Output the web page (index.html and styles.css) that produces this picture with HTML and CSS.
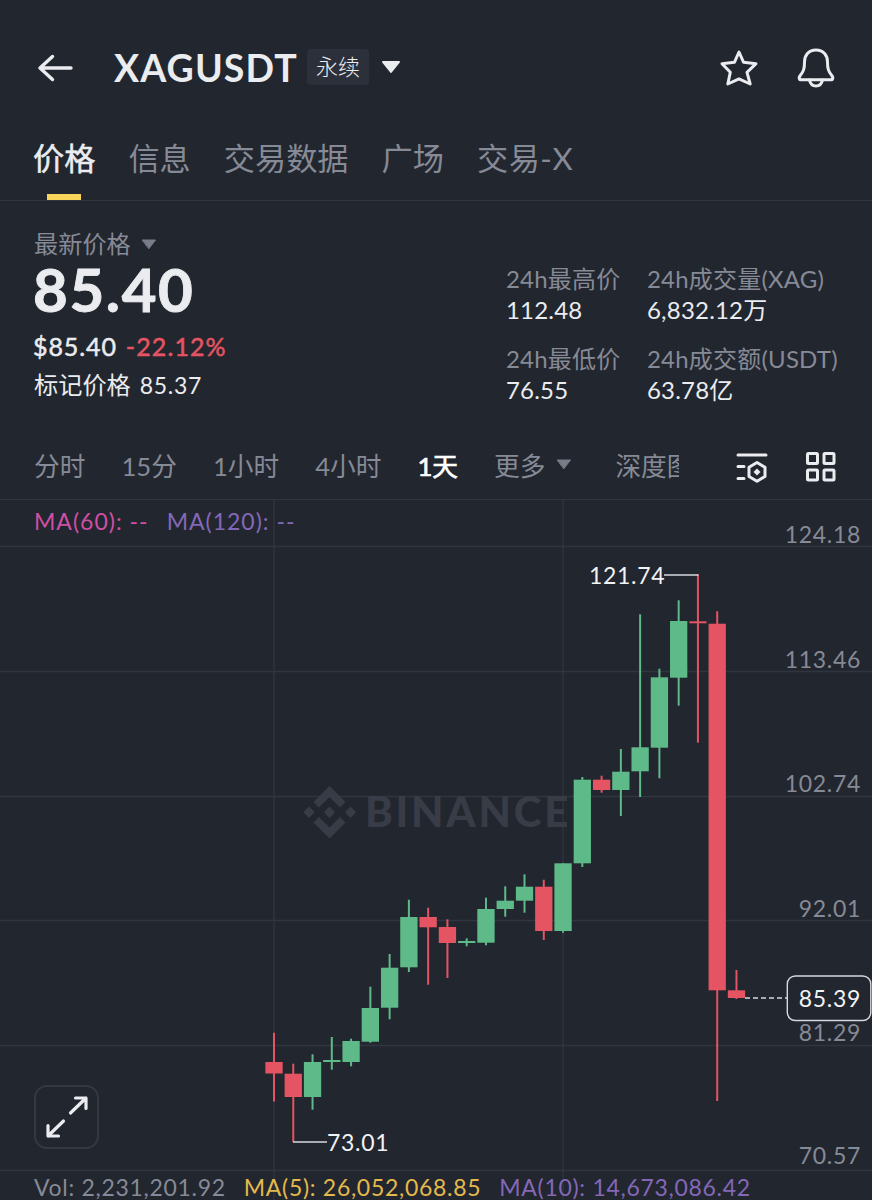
FILE: index.html
```html
<!DOCTYPE html>
<html lang="zh-CN">
<head>
    <meta charset="UTF-8">
    <meta name="viewport" content="width=device-width, initial-scale=1.0">
    <title>XAGUSDT</title>
    <link rel="stylesheet" href="styles.css">
</head>
<body>
    <header class="top-bar">
        <svg class="back" width="36" height="30" viewBox="0 0 36 30">
            <path d="M34 15H3M15.500 3.500L3 15l12.500 11.500"/>
        </svg>
        <h1>XAGUSDT</h1>
        <span class="badge">永续</span>
        <svg class="caret-big" width="20" height="13" viewBox="0 0 20 13"><path d="M2 1h16L10 11z"/></svg>
        <div class="top-icons">
            <svg width="40" height="40" viewBox="0 0 40 40">
                <path d="M20 4l4.600 10.300 12.400 1.400-9 8.600 3.200 11.700-11.200-5.100L8.800 36l2.500-11.700-8.300-8.600 12.400-1.400z"/>
            </svg>
            <svg width="40" height="42" viewBox="0 0 40 42">
                <path d="M20 3C12.500 3 8.500 8.500 8.500 15c0 7-1 9.500-4.300 13.500-1.500 2-1.300 4.200 1 4.200h29.600c2.300 0 2.500-2.200 1-4.200C32.500 24.500 31.500 22 31.500 15 31.500 8.500 27.500 3 20 3z"/>
                <path d="M13.500 33c.8 4 3.300 6 6.500 6s5.700-2 6.500-6"/>
            </svg>
        </div>
    </header>

    <nav class="tabs">
        <a class="tab active">价格</a>
        <a class="tab">信息</a>
        <a class="tab">交易数据</a>
        <a class="tab">广场</a>
        <a class="tab">交易-X</a>
    </nav>

    <section class="ticker">
        <div class="price-box">
            <div class="price-label">最新价格
                <svg width="16" height="11" viewBox="0 0 16 11"><path d="M1.500 1h13L8 9.500z"/></svg>
            </div>
            <div class="price">85.40</div>
            <div class="change"><span class="usd">$85.40</span><span class="percent">-22.12%</span></div>
            <div class="mark"><span>标记价格</span><span class="mark-num">85.37</span></div>
        </div>
        <div class="stats">
            <div class="stat"><div class="stat-label">24h最高价</div><div class="stat-value">112.48</div></div>
            <div class="stat"><div class="stat-label">24h成交量(XAG)</div><div class="stat-value">6,832.12万</div></div>
            <div class="stat"><div class="stat-label">24h最低价</div><div class="stat-value">76.55</div></div>
            <div class="stat"><div class="stat-label">24h成交额(USDT)</div><div class="stat-value">63.78亿</div></div>
        </div>
    </section>

    <div class="intervals">
        <div class="interval-list">
            <span>分时</span>
            <span>15分</span>
            <span>1小时</span>
            <span>4小时</span>
            <span class="selected">1天</span>
            <span class="more">更多<svg width="16" height="11" viewBox="0 0 16 11"><path d="M1.500 1h13L8 9.500z"/></svg></span>
            <span>深度图</span>
        </div>
        <div class="tools">
            <svg width="34" height="32" viewBox="0 0 34 32">
                <path d="M3 4h28M3 15.500h6M3 27.500h6"/>
                <path d="M22 11.500l8 4.800v9.200l-8 4.800-8-4.800v-9.200z"/>
                <path class="solid" d="M22 17.500l3.500 3.500-3.500 3.500-3.500-3.500z"/>
            </svg>
            <svg width="32" height="32" viewBox="0 0 32 32">
                <rect x="2.500" y="2.500" width="10" height="10" rx="1"/>
                <rect x="19" y="2.500" width="10" height="10" rx="1"/>
                <rect x="2.500" y="19" width="10" height="10" rx="1"/>
                <rect x="19" y="19" width="10" height="10" rx="1"/>
            </svg>
        </div>
    </div>

    <main class="chart">
        <svg class="plot" width="872" height="700" viewBox="0 500 872 700">
            <path class="grid" d="M0 546.500H872M0 671.500H872M0 796.500H872M0 920.500H872M0 1045.500H872M0 1170.500H872M274 500V1200M563 500V1200"/>

            <!-- watermark -->
            <g class="watermark">
                <path d="M329.500 786l16 16-5.500 5.500-10.500-10.500-10.500 10.500-5.500-5.500zM329.500 838.500l-16-16 5.500-5.500 10.500 10.500 10.500-10.500 5.500 5.500z"/>
                <path d="M309 806.500l5.700 5.700-5.700 5.700-5.700-5.700zM350.500 806.500l5.700 5.700-5.700 5.700-5.700-5.700zM329.500 806.500l5.700 5.700-5.700 5.700-5.700-5.700z"/>
                <text x="365" y="827" textLength="204">BINANCE</text>
            </g>

            <g id="candles"></g>

            <path class="pointer" d="M664 575H698.500M293 1142H327"/>
            <path class="last-line" d="M745 998H787"/>
            <text class="peak" x="589" y="584">121.74</text>
            <text class="peak" x="327" y="1151">73.01</text>

            <g class="axis">
                <text x="861" y="542.500">124.18</text>
                <text x="861" y="667.500">113.46</text>
                <text x="861" y="792">102.74</text>
                <text x="861" y="917">92.01</text>
                <text x="861" y="1041">81.29</text>
                <text x="861" y="1164">70.57</text>
            </g>
            <rect class="last-box" x="787.300" y="976" width="83.500" height="44.500" rx="8"/>
            <text class="last-price" x="861" y="1007">85.39</text>
        </svg>

        <div class="legend">
            <span class="pink">MA(60): --</span>
            <span class="purple">MA(120): --</span>
        </div>
        <button class="expand">
            <svg width="46" height="46" viewBox="0 0 46 46">
                <path d="M26.500 19L42 4M31.500 4H42v10.500M19.500 27L4 42M4 31.500V42h10.500"/>
            </svg>
        </button>
        <div class="volume">
            <span>Vol: 2,231,201.92</span>
            <span class="yellow">MA(5): 26,052,068.85</span>
            <span class="purple">MA(10): 14,673,086.42</span>
        </div>
    </main>
    <script src="script.js"></script>
</body>
</html>
```
FILE: styles.css
```css
* {
    box-sizing: border-box;
}
body {
    margin: 0;
    width: 872px;
    height: 1200px;
    overflow: hidden;
    background-color: #22262f;
    color: #eaecef;
    font-family: Lato, "Noto Sans CJK SC", sans-serif;
}
svg {
    display: block;
    fill: none;
    stroke-linecap: round;
    stroke-linejoin: round;
}

/* header */
.top-bar {
    display: flex;
    align-items: center;
    height: 135px;
    padding: 0 36px 0 37px;
}
.back {
    stroke: #eaecef;
    stroke-width: 3.4;
}
h1 {
    margin: 0 0 0 41px;
    width: 193px;
    font-size: 37.5px;
    font-weight: 700;
    line-height: 50px;
    letter-spacing: 1.1px;
}
.badge {
    width: 62px;
    height: 36px;
    margin-bottom: 2px;
    border-radius: 4px;
    background-color: #2b303b;
    font-size: 22px;
    font-weight: 300;
    line-height: 35px;
    text-align: center;
}
.caret-big {
    margin-left: 12px;
    fill: #eaecef;
    stroke: #eaecef;
    stroke-width: 2;
}
.top-icons {
    display: flex;
    align-items: center;
    gap: 37px;
    margin-left: auto;
    stroke: #eaecef;
    stroke-width: 3;
}

/* tabs */
.tabs {
    display: flex;
    gap: 33px;
    height: 66px;
    padding: 0 33px;
    border-bottom: 1px solid #30353f;
    color: #868a96;
    font-size: 31.2px;
    line-height: 46px;
}
.tab:last-child {
    letter-spacing: 0.5px;
}
.tab.active {
    display: flex;
    flex-direction: column;
    align-items: center;
    justify-content: space-between;
    color: #eaecef;
    -webkit-text-stroke: 0.5px;
}
.tab.active::after {
    content: "";
    width: 34px;
    height: 6px;
    background-color: #f8d55a;
}

/* ticker */
.ticker {
    display: flex;
    justify-content: space-between;
    height: 233px;
    padding: 29px 30px 0 34px;
    font-size: 24.2px;
}
.price-label {
    display: flex;
    align-items: center;
    gap: 10px;
    color: #868a96;
    line-height: 28px;
}
.price-label svg,
.more svg {
    fill: #787d8a;
    stroke: #787d8a;
}
.price {
    margin-left: -1px;
    font-size: 60px;
    font-weight: 700;
    line-height: 62px;
    letter-spacing: 1.6px;
    -webkit-text-stroke: 0.9px;
}
.change {
    display: flex;
    gap: 9px;
    margin: 7px 0 1px -1px;
    font-size: 25px;
    line-height: 38px;
    letter-spacing: 0.9px;
    -webkit-text-stroke: 0.5px;
}
.percent {
    color: #e45462;
    letter-spacing: 1.1px;
}
.mark {
    display: flex;
    gap: 9px;
    line-height: 38px;
}
.mark-num {
    font-size: 23px;
    letter-spacing: 0.7px;
}
.stats {
    display: grid;
    grid-template-columns: 141px 195px;
    grid-auto-rows: 80px;
    padding-top: 33px;
    font-size: 24px;
    line-height: 31px;
    letter-spacing: 0.2px;
}
.stat-label {
    color: #868a96;
}

/* intervals */
.intervals {
    display: flex;
    align-items: center;
    justify-content: space-between;
    height: 66px;
    padding: 0 35px 0 34px;
    border-bottom: 1px solid #30353f;
    color: #868a96;
}
.interval-list {
    display: flex;
    gap: 36px;
    width: 645px;
    margin-bottom: 4px;
    overflow: hidden;
    white-space: nowrap;
    font-size: 25.7px;
}
.selected {
    color: #fff;
    -webkit-text-stroke: 0.7px;
}
.more {
    display: flex;
    align-items: center;
    gap: 11px;
    margin-right: 7px;
}
.tools {
    display: flex;
    gap: 36px;
    stroke: #eaecef;
    stroke-width: 3;
}
.tools .solid {
    fill: #eaecef;
    stroke: none;
}

/* chart */
.chart {
    position: relative;
    height: 700px;
    font-size: 23px;
    letter-spacing: 0.7px;
}
.grid {
    stroke: #30353f;
    stroke-width: 1.3;
}
.watermark {
    fill: #383c46;
    font-size: 42px;
    font-weight: 900;
}
.up {
    fill: #5fba89;
    stroke: #5fba89;
}
.down {
    fill: #e45462;
    stroke: #e45462;
}
.up, .down {
    stroke-width: 2;
    stroke-linecap: butt;
}
.up rect, .down rect {
    stroke: none;
}
.pointer {
    stroke: #d5d8de;
    stroke-width: 1.5;
    stroke-linecap: butt;
}
.last-line {
    stroke: #d5d8de;
    stroke-width: 1.3;
    stroke-dasharray: 5 3;
    stroke-linecap: butt;
}
.peak, .last-price {
    fill: #f2f3f5;
}
.axis {
    fill: #868a96;
}
.axis text, .last-price {
    text-anchor: end;
}
.last-box {
    fill: #22262f;
    stroke: #d5d8de;
    stroke-width: 1.4;
}
.legend, .volume {
    position: absolute;
    left: 34px;
    display: flex;
    gap: 18px;
    line-height: 30px;
    white-space: nowrap;
}
.legend {
    top: 6px;
    letter-spacing: 1px;
}
.volume {
    top: 672px;
    color: #868a96;
}
.pink {
    color: #cf4fa4;
}
.purple {
    color: #8468b8;
}
.yellow {
    color: #e4b94c;
}
.expand {
    position: absolute;
    left: 34px;
    top: 585px;
    display: flex;
    align-items: center;
    justify-content: center;
    width: 65px;
    height: 64px;
    padding: 0;
    border: 2px solid #333842;
    border-radius: 13px;
    background: none;
    stroke: #eaecef;
    stroke-width: 3.2;
}
```
FILE: script.js
```js
// high, body top, body bottom, low, direction
const candles = [
    [1032.7, 1062, 1073.5, 1101.5, "down"],
    [1063.7, 1073.7, 1097, 1142, "down"],
    [1054.3, 1062, 1097, 1109.7, "up"],
    [1037, 1060, 1062, 1069.7, "up"],
    [1038.7, 1041, 1062, 1066.3, "up"],
    [986.7, 1008, 1041.7, 1042.7, "up"],
    [954, 967.7, 1007.7, 1019.3, "up"],
    [899.7, 917, 967.3, 972, "up"],
    [907.7, 917, 927.3, 984.7, "down"],
    [919.3, 927, 943, 978, "down"],
    [938.3, 941, 943, 946.3, "up"],
    [897.7, 909, 942.7, 945.3, "up"],
    [886.3, 900.7, 909, 916.7, "up"],
    [874.3, 886.7, 900.7, 912.7, "up"],
    [879.7, 886.7, 931, 940, "down"],
    [863.3, 863.3, 931, 932.7, "up"],
    [777, 779.7, 863.3, 867, "up"],
    [775.7, 779.7, 790, 792.7, "down"],
    [749, 771.7, 790, 816, "up"],
    [614.3, 747.3, 771.3, 797, "up"],
    [668.7, 677.3, 747.7, 778.3, "up"],
    [600.3, 621, 677.7, 705.7, "up"],
    [574.3, 621.3, 623.3, 742.7, "down"],
    [611.3, 623.7, 990.3, 1101, "down"],
    [970, 990.3, 998, 999, "down"]
]
const firstX = 274
const step = 19.27
const bodyWidth = 17.3

let markup = ""
candles.forEach(function([high, top, bottom, low, direction], i){
    const x = firstX + i * step
    markup += `<g class="${direction}">
        <path d="M${x} ${high}V${low}"/>
        <rect x="${x - bodyWidth / 2}" y="${top}" width="${bodyWidth}" height="${bottom - top}"/>
    </g>`
})
document.querySelector("#candles").innerHTML = markup
```
